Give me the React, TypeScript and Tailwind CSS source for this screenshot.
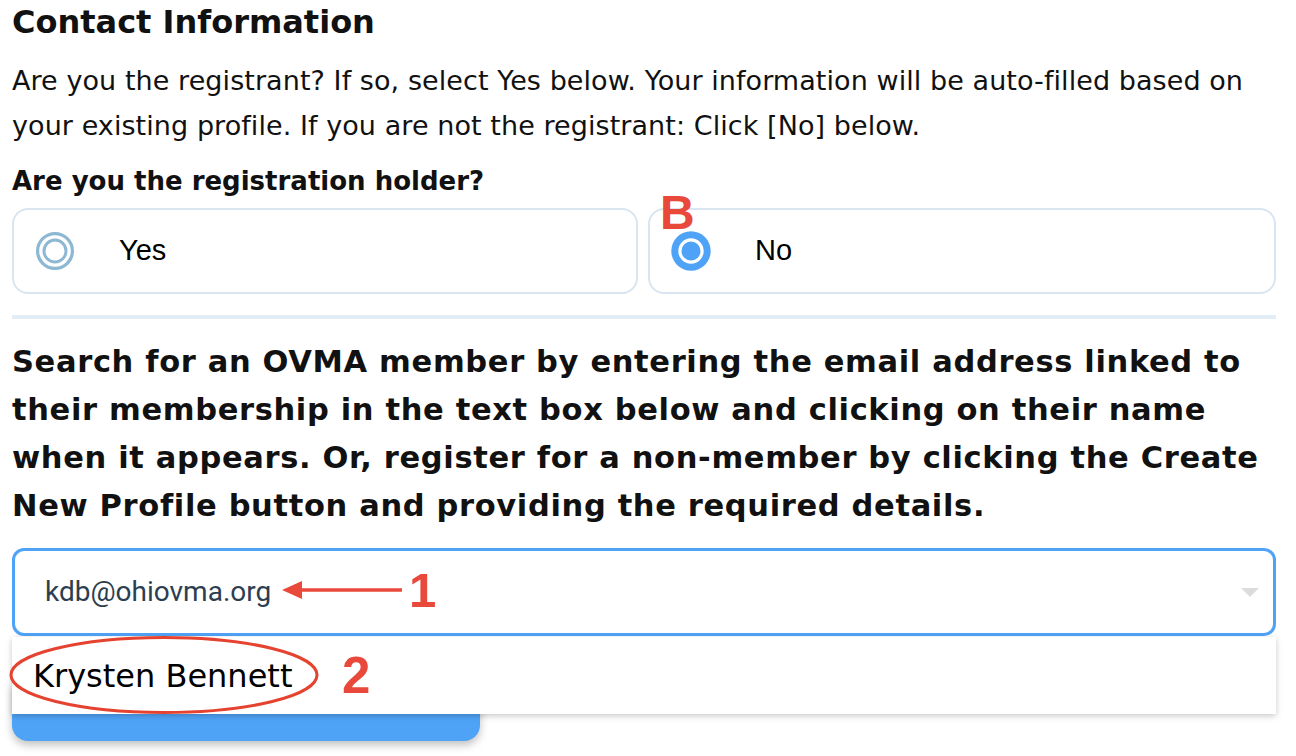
import React from 'react';

const RED = '#e8493a';

function RadioIcon({ checked }: { checked: boolean }) {
  if (checked) {
    return (
      <svg width="40" height="40" viewBox="0 0 40 40" className="shrink-0">
        <circle cx="20" cy="20" r="19.7" fill="#4fa3f7" />
        <circle cx="20" cy="20" r="11.1" fill="none" stroke="#ffffff" strokeWidth="3.2" />
      </svg>
    );
  }
  return (
    <svg width="40" height="40" viewBox="0 0 40 40" className="shrink-0">
      <circle cx="20" cy="20" r="17.4" fill="none" stroke="#8db8d3" strokeWidth="3.2" />
      <circle cx="20" cy="20" r="11" fill="none" stroke="#8db8d3" strokeWidth="3" />
    </svg>
  );
}

function RadioCard({ label, checked, children }: { label: string; checked: boolean; children?: React.ReactNode }) {
  return (
    <div className="relative h-[86px] rounded-[16px] border-2 border-[#d9e5f0] bg-white flex items-center pl-[21px]">
      <RadioIcon checked={checked} />
      <span className="ml-[44px] text-[29px] text-black font-['Liberation_Sans',Arial,sans-serif]">{label}</span>
      {children}
    </div>
  );
}

export default function App() {
  return (
    <div className="min-h-[756px] bg-white pl-3 pr-5 text-[#111] font-['DejaVu_Sans',sans-serif] overflow-hidden">
      <h2 className="pt-1 text-[32px] font-bold leading-[36px] whitespace-nowrap">Contact Information</h2>

      <p className="mt-[18px] text-[27px] tracking-[0.07px] leading-[45px] whitespace-nowrap">
        Are you the registrant? If so, select Yes below. Your information will be auto-filled based on
        <br />
        your existing profile. If you are not the registrant: Click [No] below.
      </p>

      <div className="mt-[15px] text-[26px] font-bold leading-[36px] whitespace-nowrap">
        Are you the registration holder?
      </div>

      <div className="mt-[9px] flex gap-[10px]">
        <div className="w-[626px]">
          <RadioCard label="Yes" checked={false} />
        </div>
        <div className="flex-1">
          <RadioCard label="No" checked={true}>
            {/* annotation B */}
            <span
              className="absolute left-[10px] top-[-21px] text-[48px] font-bold leading-none font-['Liberation_Sans',Arial,sans-serif]"
              style={{ color: RED }}
            >
              B
            </span>
          </RadioCard>
        </div>
      </div>

      <div className="mt-[21px] h-[4px] bg-[#e3edf5]" />

      <p className="mt-[19px] text-[30.5px] tracking-[0.65px] font-bold leading-[48px] whitespace-nowrap">
        Search for an OVMA member by entering the email address linked to
        <br />
        their membership in the text box below and clicking on their name
        <br />
        when it appears. Or, register for a non-member by clicking the Create
        <br />
        New Profile button and providing the required details.
      </p>

      <div className="relative mt-[18px]">
        <div className="h-[88px] rounded-[12px] border-[3px] border-[#4fa3f7] bg-white flex items-center pl-[30px] pr-[14px]">
          <span className="text-[28px] text-[#2c3e50] font-['Roboto',sans-serif]">kdb@ohiovma.org</span>
          <div className="ml-auto w-0 h-0 border-l-[9px] border-r-[9px] border-t-[9px] border-l-transparent border-r-transparent border-t-[#dcdcdc]" />
        </div>

        {/* annotation arrow + 1 */}
        <svg className="absolute left-[270px] top-[32px]" width="122" height="20" viewBox="0 0 122 20">
          <line x1="16" y1="10" x2="120" y2="10" stroke={RED} strokeWidth="3.5" />
          <polygon points="0,10 20,1 20,19" fill={RED} />
        </svg>
        <span
          className="absolute left-[397px] top-[18px] text-[49px] font-bold leading-none font-['Liberation_Sans',Arial,sans-serif]"
          style={{ color: RED }}
        >
          1
        </span>

        <div className="absolute left-0 right-0 top-[89px] h-[77px] z-10 bg-white shadow-[0_2px_6px_rgba(0,0,0,0.22)] flex items-center pl-[21px]">
          <span className="text-[32px] text-black font-['DejaVu_Sans',sans-serif] leading-none">Krysten Bennett</span>
          <svg className="absolute left-[-4px] top-[-2px]" width="312" height="80" viewBox="0 0 312 80">
            <ellipse cx="156" cy="40" rx="153" ry="37.5" fill="none" stroke="#e5432f" strokeWidth="3" />
          </svg>
          <span
            className="absolute left-[330px] top-[13px] text-[51px] font-bold leading-none font-['Liberation_Sans',Arial,sans-serif]"
            style={{ color: RED }}
          >
            2
          </span>
        </div>
      </div>

      <div className="mt-[46px] h-[59px] w-[468px] rounded-b-[16px] rounded-t-[4px] bg-[#4fa3f7] shadow-[0_4px_8px_rgba(0,0,0,0.25)]" />
    </div>
  );
}
